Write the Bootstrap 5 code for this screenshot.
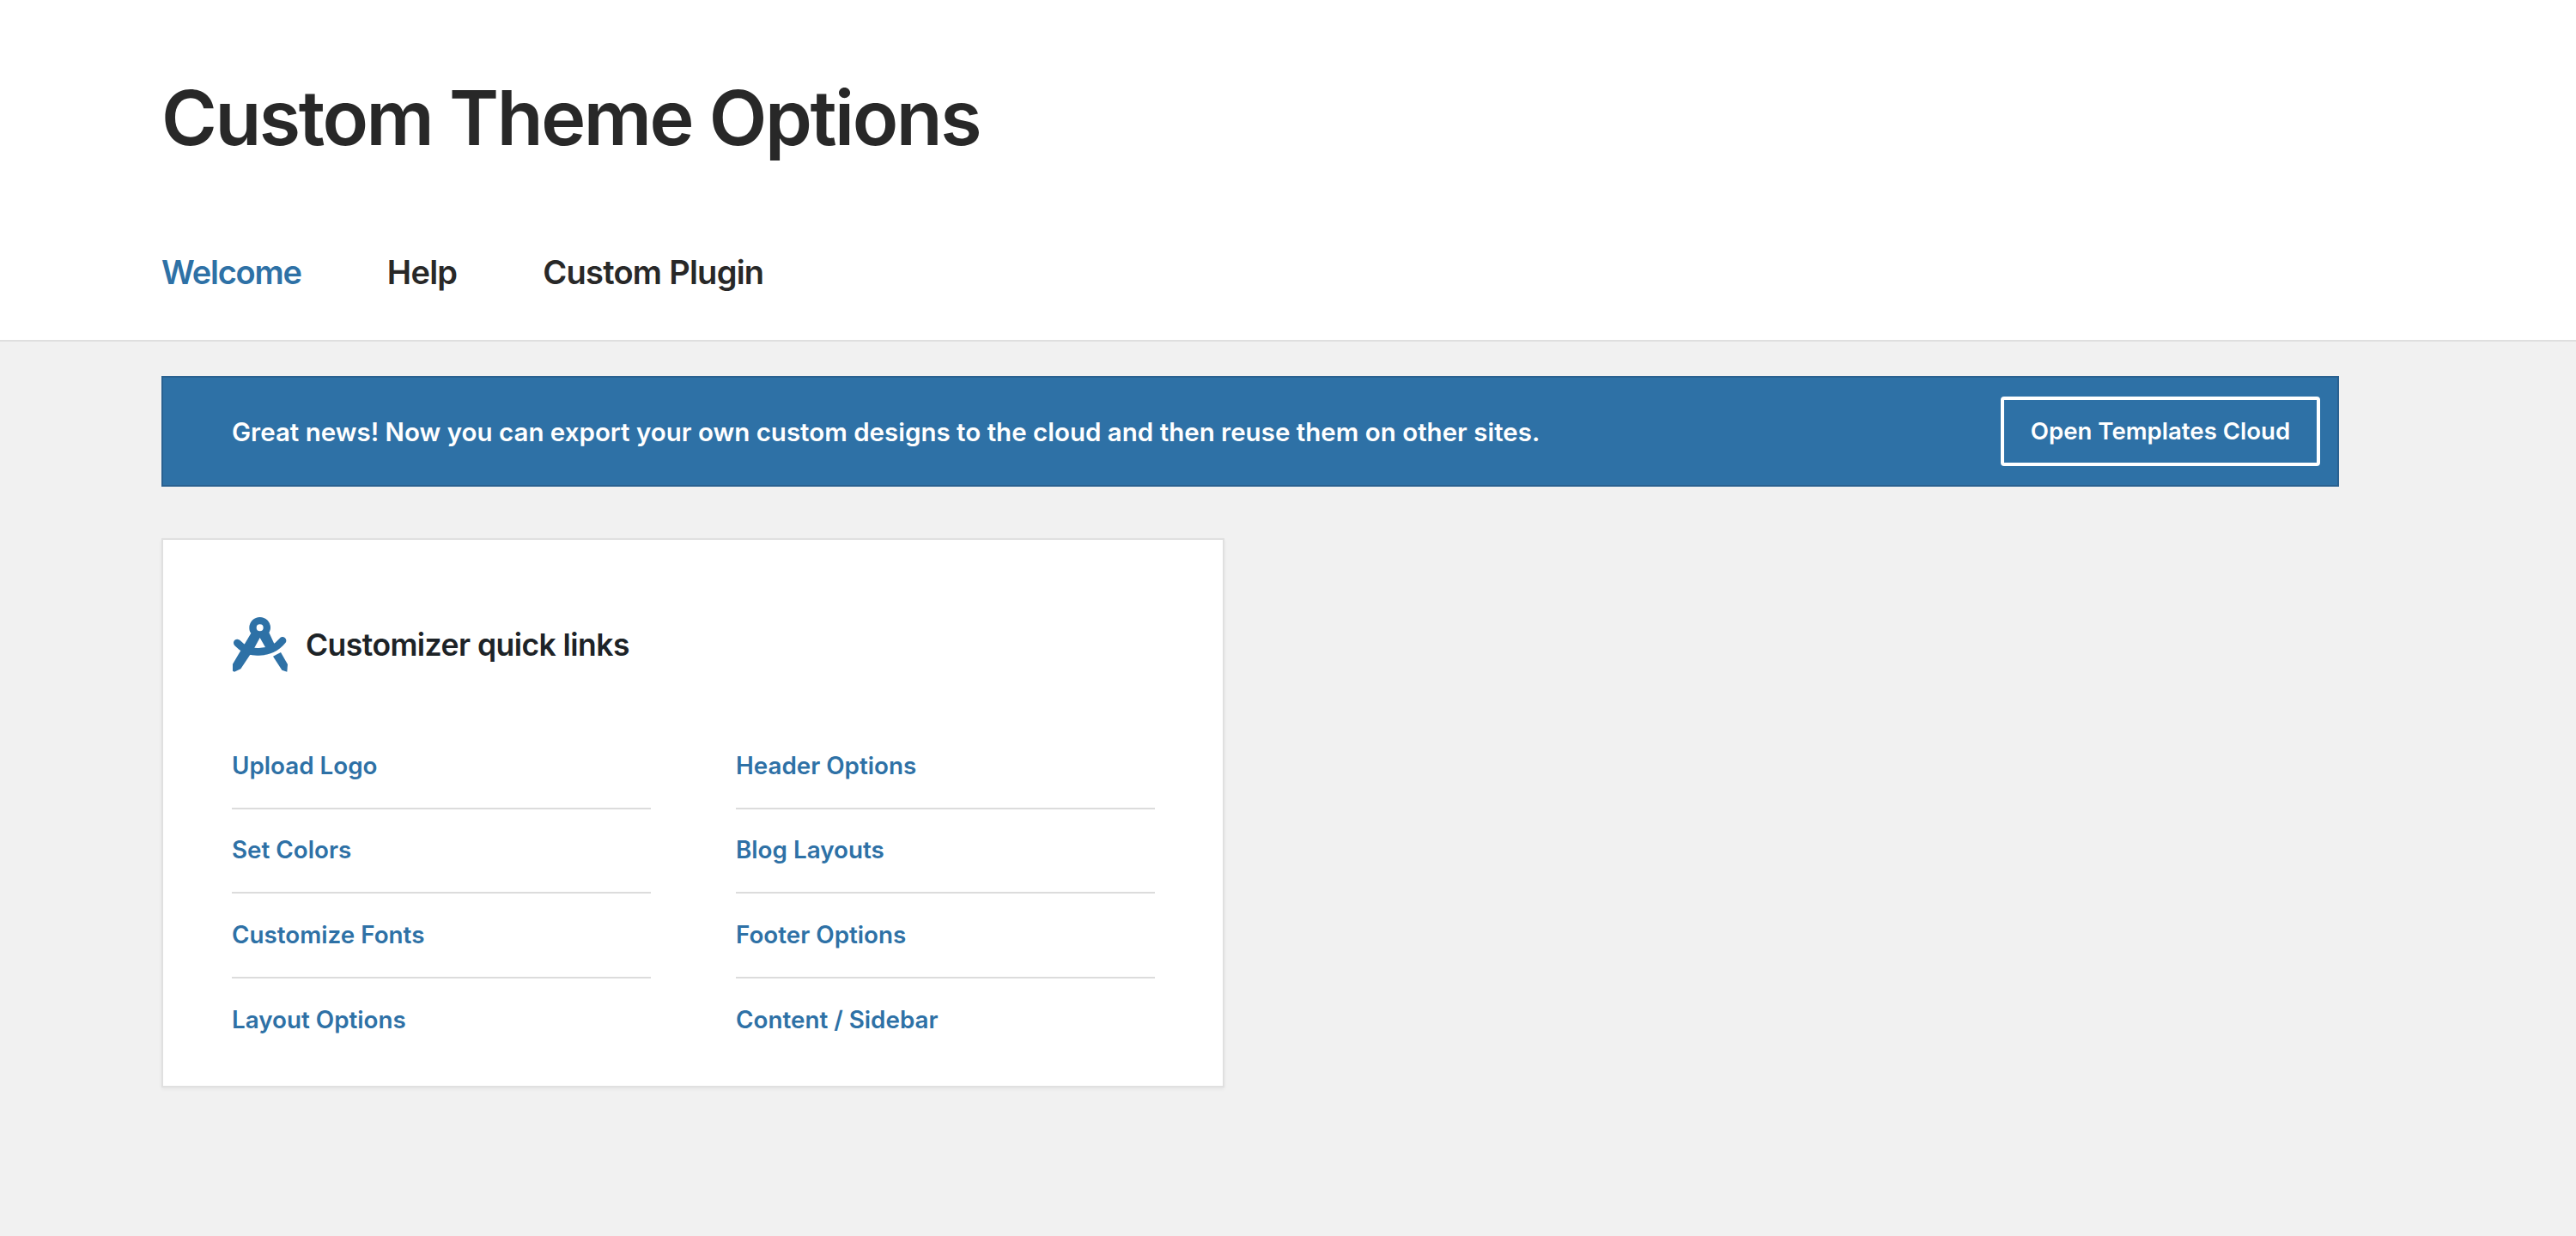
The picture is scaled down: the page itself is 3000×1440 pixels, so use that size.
<!DOCTYPE html>
<html lang="en">
<head>
<meta charset="utf-8">
<title>Custom Theme Options</title>
<link rel="stylesheet" href="https://cdn.jsdelivr.net/npm/bootstrap@5.3.0/dist/css/bootstrap.min.css">
<style>
html,body{height:100%}
body{background:#f1f1f1;font-family:Inter,"Liberation Sans",sans-serif;overflow:hidden}
.opt-head{background:#fff;border-bottom:2px solid #dfdfdf;height:398px;padding:0 188px}
.opt-title{font-size:88px;font-weight:600;line-height:1;color:#282828;margin:0;padding-top:93px;letter-spacing:-2.45px}
.opt-tabs{gap:100px;margin-top:113px}
.opt-tabs a{font-size:38px;font-weight:600;line-height:46px;color:#282828;text-decoration:none;padding:0;letter-spacing:-.75px}
.opt-tabs a.on{color:#2e71a6;letter-spacing:-1.2px}
.opt-main{padding:40px 0 0 188px}
.opt-notice{width:2536px;height:129px;background:#2e71a6;border:2px solid #2a6190;padding:0 20px 0 80px}
.opt-notice p{margin:0;padding-top:2px;color:#fff;font-size:29.5px;font-weight:600}
.opt-btn{width:372px;height:81px;border:4px solid #fff;border-radius:4px;color:#fff;font-size:27.6px;font-weight:600;padding:1px 0 0;background:transparent}
.opt-box{width:1238px;height:640px;margin-top:60px;background:#fff;border:2px solid #e0e0e0;box-shadow:0 2px 4px rgba(0,0,0,.05);padding:89px 80px 0}
.opt-box-head{gap:20px;height:68px}
.opt-box-head svg{width:66px;height:66px;flex:none}
.opt-box-head h2{margin:0;padding-top:1px;font-size:35.5px;font-weight:600;color:#1d2327;letter-spacing:-.55px}
.opt-cols{margin:59px 0 0;gap:99px}
.opt-col{flex:0 0 488px;width:488px;padding:0}
.opt-col .list-group-item{background:none;padding:0;height:98.2px;border-color:#dcdcdc;border-width:0 0 2px;display:flex;align-items:center}
.opt-col .list-group-item:last-child{border-width:0}
.opt-col a{font-size:27.8px;font-weight:600;color:#2e71a6;text-decoration:none}
</style>
</head>
<body>
<header class="opt-head">
  <h1 class="opt-title">Custom Theme Options</h1>
  <nav class="nav opt-tabs">
    <a class="nav-link on" href="#">Welcome</a>
    <a class="nav-link" href="#">Help</a>
    <a class="nav-link" href="#">Custom Plugin</a>
  </nav>
</header>
<main class="opt-main">
  <div class="opt-notice d-flex align-items-center justify-content-between">
    <p>Great news! Now you can export your own custom designs to the cloud and then reuse them on other sites.</p>
    <button type="button" class="btn opt-btn">Open Templates Cloud</button>
  </div>
  <section class="opt-box">
    <div class="opt-box-head d-flex align-items-center">
      <svg viewBox="60 60 198 198" aria-hidden="true">
        <path fill="#2e71a6" fill-rule="evenodd" d="M158 60a37 37 0 0 1 37 37c0 7-2 12-5 17l24 52-32 8-24-42-24 44-43 65-22 10-6-3v-24l64-108c-5-5-6-12-6-19a37 37 0 0 1 37-37zm0 25a12 12 0 1 0 0 24 12 12 0 0 0 0-24z"/>
        <path fill="#2e71a6" d="M204 197l27-14 24 42-2 26-18-6z"/>
        <path fill="none" stroke="#2e71a6" stroke-width="26" stroke-linecap="round" d="M79 150c22 24 44 33 76 31 32-1 62-14 82-39"/>
      </svg>
      <h2>Customizer quick links</h2>
    </div>
    <div class="d-flex opt-cols">
      <div class="opt-col">
        <ul class="list-group list-group-flush">
          <li class="list-group-item"><a href="#">Upload Logo</a></li>
          <li class="list-group-item"><a href="#">Set Colors</a></li>
          <li class="list-group-item"><a href="#">Customize Fonts</a></li>
          <li class="list-group-item"><a href="#">Layout Options</a></li>
        </ul>
      </div>
      <div class="opt-col">
        <ul class="list-group list-group-flush">
          <li class="list-group-item"><a href="#">Header Options</a></li>
          <li class="list-group-item"><a href="#">Blog Layouts</a></li>
          <li class="list-group-item"><a href="#">Footer Options</a></li>
          <li class="list-group-item"><a href="#">Content / Sidebar</a></li>
        </ul>
      </div>
    </div>
  </section>
</main>
<script src="https://cdn.jsdelivr.net/npm/bootstrap@5.3.0/dist/js/bootstrap.bundle.min.js"></script>
</body>
</html>
